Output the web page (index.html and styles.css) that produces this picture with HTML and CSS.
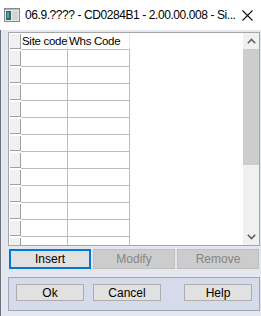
FILE: index.html
```html
<!DOCTYPE html>
<html lang="en">
<head>
    <meta charset="UTF-8">
    <title>06.9.???? - CD0284B1 - 2.00.00.008 - Site</title>
    <link rel="stylesheet" href="styles.css">
</head>
<body>
    <div class="titlebar">
        <svg class="app-icon" width="16" height="14" viewBox="0 0 16 14">
            <rect x="0.5" y="0.5" width="15" height="13" fill="#e8e8e8" stroke="#8a8a8a"/>
            <rect x="2" y="3" width="5" height="9" fill="#2e6b6b"/>
            <rect x="3" y="4" width="2" height="6" fill="#5aa0a0"/>
            <rect x="8" y="3" width="6" height="9" fill="#cfd6d6"/>
            <rect x="1" y="1" width="14" height="1" fill="#b8b8b8"/>
        </svg>
        <span class="title">06.9.???? - CD0284B1 - 2.00.00.008 - Si...</span>
        <svg class="close" width="11" height="11" viewBox="0 0 11 11">
            <path d="M0.5 0.5 L10.5 10.5 M10.5 0.5 L0.5 10.5" stroke="#111" stroke-width="1.1" fill="none"/>
        </svg>
    </div>

    <div class="client">
        <div class="grid">
            <div class="cells">
                <div class="row head">
                    <div class="rh"><span></span></div>
                    <div class="c1">Site code</div>
                    <div class="c2">Whs Code</div>
                </div>
                <div class="row"><div class="rh"><span></span></div><div class="c1"></div><div class="c2"></div></div>
                <div class="row"><div class="rh"><span></span></div><div class="c1"></div><div class="c2"></div></div>
                <div class="row"><div class="rh"><span></span></div><div class="c1"></div><div class="c2"></div></div>
                <div class="row"><div class="rh"><span></span></div><div class="c1"></div><div class="c2"></div></div>
                <div class="row"><div class="rh"><span></span></div><div class="c1"></div><div class="c2"></div></div>
                <div class="row"><div class="rh"><span></span></div><div class="c1"></div><div class="c2"></div></div>
                <div class="row"><div class="rh"><span></span></div><div class="c1"></div><div class="c2"></div></div>
                <div class="row"><div class="rh"><span></span></div><div class="c1"></div><div class="c2"></div></div>
                <div class="row"><div class="rh"><span></span></div><div class="c1"></div><div class="c2"></div></div>
                <div class="row"><div class="rh"><span></span></div><div class="c1"></div><div class="c2"></div></div>
                <div class="row"><div class="rh"><span></span></div><div class="c1"></div><div class="c2"></div></div>
                <div class="row"><div class="rh"><span></span></div><div class="c1"></div><div class="c2"></div></div>
            </div>
            <div class="vscroll">
                <div class="arrow">
                    <svg width="9" height="6" viewBox="0 0 9 6"><path d="M0.8 5.2 L4.5 1.5 L8.2 5.2" stroke="#606060" stroke-width="1.6" fill="none"/></svg>
                </div>
                <div class="thumb"></div>
                <div class="track"></div>
                <div class="arrow">
                    <svg width="9" height="6" viewBox="0 0 9 6"><path d="M0.8 0.8 L4.5 4.5 L8.2 0.8" stroke="#606060" stroke-width="1.6" fill="none"/></svg>
                </div>
            </div>
        </div>

        <div class="actions">
            <button class="btn focus">Insert</button>
            <button class="btn off">Modify</button>
            <button class="btn off">Remove</button>
        </div>

        <div class="panel">
            <button class="pbtn">Ok</button>
            <button class="pbtn cancel">Cancel</button>
            <button class="pbtn help">Help</button>
        </div>
    </div>
</body>
</html>
```

FILE: styles.css
```css
* {
    box-sizing: border-box;
}
body {
    margin: 0;
    width: 261px;
    height: 316px;
    overflow: hidden;
    background-color: #e4e7ef;
    font-family: "Segoe UI", "Liberation Sans", Arial, sans-serif;
    font-size: 11px;
    color: #000;
}
.titlebar {
    height: 30px;
    background-color: #fff;
    display: flex;
    align-items: center;
    padding-left: 4px;
}
.app-icon {
    flex: none;
    margin-right: 5px;
}
.title {
    font-size: 12px;
    letter-spacing: -0.42px;
    white-space: nowrap;
}
.close {
    flex: none;
    margin-left: auto;
    margin-right: 8px;
}
.client {
    height: 286px;
    border-left: 1px solid #6c717c;
    padding: 2px 1px 0 7px;
}
.grid {
    height: 214px;
    border: 1px solid #a6a6a6;
    background-color: #fff;
    display: flex;
}
.cells {
    flex: 1;
    overflow: hidden;
}
.row {
    display: flex;
    height: 17px;
}
.rh {
    width: 12px;
    padding: 1px 0 1px 1px;
    border-bottom: 1px solid #fff;
}
.rh span {
    display: block;
    height: 15px;
    background-color: #f0f0f0;
    border-right: 1px solid #a0a0a0;
    border-bottom: 1px solid #a0a0a0;
}
.c1, .c2 {
    border-right: 1px solid #bdbdbd;
    border-bottom: 1px solid #bdbdbd;
    white-space: nowrap;
    overflow: hidden;
}
.c1 {
    width: 47px;
}
.c2 {
    width: 62px;
}
.head .c1, .head .c2 {
    border-right-color: #e6e6e6;
    padding-left: 1px;
    line-height: 16px;
    font-size: 11.5px;
    letter-spacing: -0.3px;
}
.vscroll {
    width: 16px;
    background-color: #f0f0f0;
    display: flex;
    flex-direction: column;
}
.arrow {
    height: 16px;
    display: flex;
    align-items: center;
    justify-content: center;
}
.thumb {
    height: 116px;
    background-color: #cdcdcd;
}
.track {
    flex: 1;
}
.actions {
    display: flex;
    gap: 2px;
    margin-top: 3px;
    padding: 0 1px;
}
.btn {
    width: 82px;
    height: 20px;
    font-family: inherit;
    font-size: 12px;
    padding: 0;
    background-color: #e1e1e1;
    border: 1px solid #adadad;
    color: #000;
}
.btn.focus {
    border: 2px solid #0078d7;
}
.btn.off {
    background-color: #cccccc;
    border-color: #bfbfbf;
    color: #858585;
}
.panel {
    margin-top: 8px;
    height: 34px;
    background-color: #d5dbea;
    border: 1px solid #9ea6b8;
    display: flex;
    align-items: flex-start;
    padding: 6px 7px 0 7px;
}
.pbtn {
    width: 68px;
    height: 17px;
    padding: 0;
    font-family: inherit;
    font-size: 12px;
    line-height: 14px;
    background-color: #e1e1e1;
    border: 1px solid #adadad;
    color: #000;
}
.cancel {
    margin-left: 9px;
}
.help {
    margin-left: auto;
}
```
